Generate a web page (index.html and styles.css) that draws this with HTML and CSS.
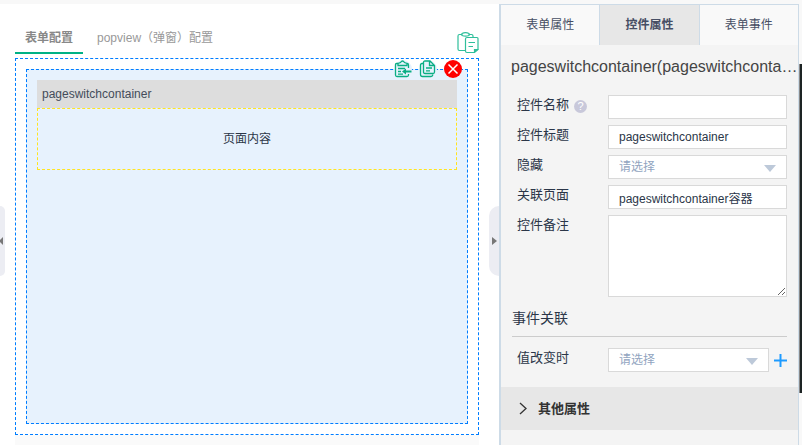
FILE: index.html
```html
<!DOCTYPE html>
<html lang="zh-CN">
<head>
<meta charset="utf-8">
<title>表单配置</title>
<link rel="stylesheet" href="styles.css">
</head>
<body>
<div class="app">
  <main class="designer">
    <header class="toolbar">
      <nav class="views">
        <a class="view active" href="#form">表单配置</a>
        <a class="view" href="#popview">popview（弹窗）配置</a>
      </nav>
      <button class="icon-button paste" aria-label="粘贴">
        <svg width="22" height="22" viewBox="0 0 22 22" fill="none" stroke="#2fbf9b" stroke-width="1.2">
          <path d="M5 2.500H2.500Q1 2.500 1 4V17Q1 18.500 2.500 18.500H8M12 2.500H14.500Q16 2.500 16 4V5"/>
          <path d="M5 1.500Q8.500-.2 12 1.500V3.500Q8.500 4.700 5 3.500Z"/>
          <path d="M10 5.500H20Q21 5.500 21 6.500V17.500L17.500 20.500H10Q8.500 20.500 8.500 19V7Q8.500 5.500 10 5.500ZM11.500 10.500H18M11.500 14.500H16"/>
          <path d="M17.500 20V17.500H20.500Z" fill="#1db992"/>
        </svg>
      </button>
    </header>
    <section class="canvas">
      <div class="container-block">
        <div class="actions">
          <button class="icon-button" aria-label="粘贴到容器">
            <svg width="18" height="18" viewBox="0 0 18 18" fill="none" stroke="#0aae83" stroke-width="1.300">
              <path d="M4 3.500H2.500Q1.500 3.500 1.500 4.500V15Q1.500 16.500 3 16.500H13Q14.500 16.500 14.500 15V14M13 3.500Q14.500 3.500 14.500 5V8"/>
              <path d="M4 5.500V3.500L6.500 2.500Q8.500-.5 10.500 2.500L13 3.500V5.500ZM4 8.500H11M4 11.500H7M4 14.200H9"/>
              <path d="M17.500 11.500H11" stroke-width="2"/><path d="M8 11.500L12 8.500V14.500Z" fill="#0aae83" stroke="none"/>
            </svg>
          </button>
          <button class="icon-button" aria-label="复制">
            <svg width="18" height="18" viewBox="0 0 18 18" fill="none" stroke="#0aae83" stroke-width="1.300">
              <path d="M6 1H11L15.500 5.500V12Q15.500 13.500 14 13.500H6Q4.500 13.500 4.500 12V2.500Q4.500 1 6 1ZM10.500 1V5.500H15.500M7 8H13M7 10.800H11"/>
              <path d="M4 3.500H3Q1.500 3.500 1.500 5V14.500Q1.500 16.500 3.500 16.500H12Q13.500 16.500 14 14.500"/>
            </svg>
          </button>
          <button class="icon-button" aria-label="删除">
            <svg width="18" height="18" viewBox="0 0 18 18">
              <circle cx="9" cy="9" r="9" fill="#f00"/>
              <path d="M4.500 4.500L13.500 13.500M13.500 4.500L4.500 13.500" stroke="#fff" stroke-width="1.500"/>
            </svg>
          </button>
        </div>
        <h2 class="block-title">pageswitchcontainer</h2>
        <div class="block-body">页面内容</div>
      </div>
    </section>
    <div class="canvas-foot"></div>
    <button class="handle handle-left" aria-label="收起左栏"><svg width="3" height="8" viewBox="0 0 3 8"><path d="M3 0V8L0 5V3Z" fill="#777"/></svg></button>
    <button class="handle handle-right" aria-label="收起右栏"><svg width="5" height="8" viewBox="0 0 5 8"><path d="M0 0V8L5 4Z" fill="#777"/></svg></button>
  </main>
  <aside class="properties">
    <nav class="tabs">
      <button class="tab">表单属性</button>
      <button class="tab selected">控件属性</button>
      <button class="tab">表单事件</button>
    </nav>
    <h1 class="control-title">pageswitchcontainer(pageswitchconta…</h1>
    <form class="fields">
      <div class="row"><label for="name">控件名称</label><span class="help">?</span><input class="field" id="name" type="text"></div>
      <div class="row"><label for="title">控件标题</label><input class="field" id="title" type="text" value="pageswitchcontainer"></div>
      <div class="row"><label for="hidden">隐藏</label><select class="field" id="hidden"><option>请选择</option></select></div>
      <div class="row"><label for="page">关联页面</label><input class="field" id="page" type="text" value="pageswitchcontainer容器"></div>
      <div class="row"><label for="note">控件备注</label><textarea class="field" id="note"></textarea></div>
      <h3 class="group">事件关联</h3>
      <div class="row"><label for="change">值改变时</label><select class="field" id="change"><option>请选择</option></select>
        <button class="icon-button add" type="button" aria-label="添加"><svg width="13" height="13" viewBox="0 0 13 13"><path d="M6.500 0V13M0 6.500H13" stroke="#1e9bff" stroke-width="2"/></svg></button>
      </div>
    </form>
    <button class="more">
      <svg width="8" height="13" viewBox="0 0 8 13"><path d="M1 1L7 6.500L1 12" fill="none" stroke="#333" stroke-width="1.300"/></svg>
      其他属性
    </button>
  </aside>
  <div class="edge"></div>
</div>
</body>
</html>
```
FILE: styles.css
```css
* { box-sizing: border-box; }

body {
  margin: 0;
  background: #f8f8f8;
  color: #2b3648;
  font: 12px/18px "Liberation Sans", "Noto Sans CJK SC", sans-serif;
}

button, input, select, textarea { font: inherit; color: inherit; }
button { border: 0; padding: 0; background: none; }
h1, h2, h3 { margin: 0; font-weight: normal; }

.app {
  display: grid;
  grid-template-columns: 1fr 300px 3px;
  min-height: 100vh;
}

.designer {
  position: relative;
  display: flex;
  flex-direction: column;
  margin-top: 4px;
  padding: 0 20px 0 15px;
  background: #fff;
}

.toolbar {
  display: flex;
  justify-content: space-between;
  align-items: flex-end;
  height: 50px;
  margin-bottom: 4px;
}
.views { display: flex; gap: 4px; }
.view {
  padding: 0 10px 5px;
  border-bottom: 2px solid transparent;
  color: #999;
  text-decoration: none;
}
.view.active { border-color: #00b285; color: #888; font-weight: bold; }

.icon-button { display: flex; flex: none; }

.canvas {
  display: flex;
  flex: 1;
  padding: 10px;
  border: 1px dashed #007dff;
}
.canvas-foot { height: 10px; background: #fafafa; }
.container-block {
  position: relative;
  flex: 1;
  padding: 10px;
  border: 1px dashed #007dff;
  background: #e7f2fd;
}
.actions {
  position: absolute;
  top: -10px;
  right: 5px;
  display: flex;
  gap: 7px;
}
.actions .icon-button { background: #e7f2fd; border-radius: 9px; }
.block-title {
  padding: 5px;
  background: #ddd;
  color: #444c5a;
  font-size: 12px;
}
.block-body {
  padding: 20px 0;
  border: 1px dashed #ffe51f;
  line-height: 20px;
  text-align: center;
}

.handle {
  position: absolute;
  top: 202px;
  display: flex;
  align-items: center;
  justify-content: center;
  height: 70px;
  background: #ecedf3;
}
.handle-left { left: 0; width: 5px; border-radius: 0 5px 5px 0; justify-content: flex-start; }
.handle-right { right: 0; width: 10px; border-radius: 10px 0 0 10px; }

.properties {
  min-width: 0;
  margin-top: 4px;
  border: solid #cddbe7;
  border-width: 1px 1px 0 2px;
  background: #f4f4f4;
}
.tabs { display: flex; }
.tab {
  flex: 1;
  height: 40px;
  background: #f9f9f9;
  color: #464e64;
}
.tab.selected {
  border: solid #cddbe7;
  border-width: 0 1px;
  background: #e7e7e7;
  font-weight: bold;
}
.control-title {
  padding: 10px 0 10px 10px;
  color: #444;
  font-size: 16px;
  line-height: 24px;
  white-space: nowrap;
}

.fields { padding: 6px 11px 9px; }
.row {
  display: flex;
  align-items: flex-start;
  margin-bottom: 6px;
  padding-left: 5px;
}
.row label {
  flex: none;
  width: 91px;
  font-size: 13px;
  line-height: 20px;
}
.help {
  width: 13px;
  height: 13px;
  margin: 5px 21px 0 -34px;
  border-radius: 50%;
  background: #c8c8da;
  color: #fff;
  font-size: 11px;
  line-height: 13px;
  text-align: center;
}
.field {
  flex: 1;
  min-width: 0;
  height: 24px;
  margin: 0;
  padding: 0 10px;
  border: 1px solid #d9d9d9;
  border-radius: 0;
  background: #fff;
}
select.field {
  appearance: none;
  background: #fff url("data:image/svg+xml,%3Csvg xmlns='http://www.w3.org/2000/svg' width='12' height='7'%3E%3Cpath d='M0 0H12L6 7Z' fill='%23bdc9d9'/%3E%3C/svg%3E") no-repeat right 10px top 9px;
  color: #91a4c0;
}
textarea.field {
  height: 82px;
  padding: 4px 10px;
}
.group {
  margin: 11px 0;
  padding-bottom: 8px;
  border-bottom: 1px solid #ccc;
  font-size: 14px;
  line-height: 20px;
}
.add { margin: 6px 0 0 5px; }

.more {
  display: flex;
  align-items: center;
  gap: 11px;
  width: 100%;
  height: 43px;
  padding-left: 18px;
  background: #e7e7e7;
  color: #333;
  font-size: 13px;
  font-weight: bold;
}

.edge {
  margin: 64px 0 52px;
  border-left: 1px solid #888;
  background: #1d2424;
}
```
